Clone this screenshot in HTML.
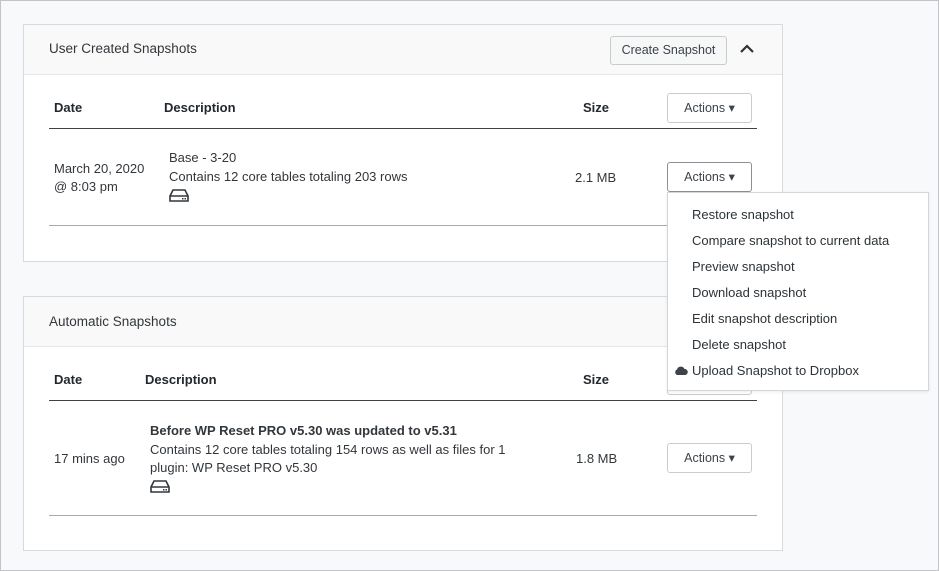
<!DOCTYPE html>
<html><head><style>
*{margin:0;padding:0;box-sizing:border-box}
body{width:939px;height:571px;background:#f8f9fa;font-family:"Liberation Sans",sans-serif;font-size:13px;color:#32373c;position:relative;overflow:hidden}
.frame{position:absolute;left:0;top:0;width:939px;height:571px;border:1px solid #c3c4c7}
.a{position:absolute;white-space:nowrap}
.panel{position:absolute;background:#fff;border:1px solid #d7dade}
.ph{position:absolute;left:0;right:0;top:0;background:#f9f9f9;border-bottom:1px solid #e2e4e7}
.b{font-weight:bold;color:#23282d}
.btn{position:absolute;border:1px solid #c8ccd0;border-radius:3px;background:#fff;color:#3c434a;font-size:12.5px;text-align:center}
.line{position:absolute;left:49px;width:708px}
.menu{position:absolute;left:667px;top:192px;width:262px;height:199px;background:#fff;border:1px solid #d4d6d9;box-shadow:0 1px 3px rgba(0,0,0,.08)}
.menu div{position:absolute;left:24px;font-size:13px;color:#2c3338}
</style></head><body>
<div class="frame"></div>
<div class="panel" style="left:23px;top:24px;width:760px;height:238px">
 <div class="ph" style="height:50px"></div>
</div>
<div class="a" style="left:49px;top:41px;font-size:13.5px">User Created Snapshots</div>
<div class="btn" style="left:610px;top:36px;width:117px;height:29px;line-height:27px;background:#f6f7f7">Create Snapshot</div>
<svg class="a" style="left:739px;top:43px" width="16" height="12" viewBox="0 0 16 12"><path d="M2 9 L8 3 L14 9" fill="none" stroke="#333" stroke-width="2.2"/></svg>
<div class="a b" style="left:54px;top:100px">Date</div>
<div class="a b" style="left:164px;top:100px">Description</div>
<div class="a b" style="left:583px;top:100px">Size</div>
<div class="btn" style="left:667px;top:93px;width:85px;height:30px;line-height:28px">Actions &#9662;</div>
<div class="line" style="top:128px;border-top:1px solid #3c434a"></div>
<div class="a" style="left:54px;top:160px;line-height:18px">March 20, 2020<br>@ 8:03 pm</div>
<div class="a" style="left:169px;top:150px;color:#32373c">Base - 3-20</div>
<div class="a" style="left:169px;top:169px">Contains 12 core tables totaling 203 rows</div>
<svg class="a" style="left:169px;top:188px" width="20" height="15" viewBox="0 0 20 15"><path d="M1 8 L4 2 H16 L19 8 V13 H1 Z M1 8 H19" fill="none" stroke="#32373c" stroke-width="1.6"/><rect x="13" y="10" width="1.5" height="1.5" fill="#32373c"/><rect x="15.5" y="10" width="1.5" height="1.5" fill="#32373c"/></svg>
<div class="a" style="left:575px;top:170px">2.1 MB</div>
<div class="btn" style="left:667px;top:162px;width:85px;height:30px;line-height:28px;border-color:#8c8f94">Actions &#9662;</div>
<div class="line" style="top:225px;border-top:1px solid #a7aaad"></div>

<div class="panel" style="left:23px;top:296px;width:760px;height:255px">
 <div class="ph" style="height:50px"></div>
</div>
<div class="a" style="left:49px;top:314px;font-size:13.5px">Automatic Snapshots</div>
<div class="a b" style="left:54px;top:372px">Date</div>
<div class="a b" style="left:145px;top:372px">Description</div>
<div class="a b" style="left:583px;top:372px">Size</div>
<div class="btn" style="left:667px;top:365px;width:85px;height:30px"></div>
<div class="line" style="top:400px;border-top:1px solid #3c434a"></div>
<div class="a" style="left:54px;top:451px">17 mins ago</div>
<div class="a b" style="left:150px;top:423px;color:#32373c">Before WP Reset PRO v5.30 was updated to v5.31</div>
<div class="a" style="left:150px;top:441px;line-height:18px">Contains 12 core tables totaling 154 rows as well as files for 1<br>plugin: WP Reset PRO v5.30</div>
<svg class="a" style="left:150px;top:479px" width="20" height="15" viewBox="0 0 20 15"><path d="M1 8 L4 2 H16 L19 8 V13 H1 Z M1 8 H19" fill="none" stroke="#32373c" stroke-width="1.6"/><rect x="13" y="10" width="1.5" height="1.5" fill="#32373c"/><rect x="15.5" y="10" width="1.5" height="1.5" fill="#32373c"/></svg>
<div class="a" style="left:576px;top:451px">1.8 MB</div>
<div class="btn" style="left:667px;top:443px;width:85px;height:30px;line-height:28px">Actions &#9662;</div>
<div class="line" style="top:515px;border-top:1px solid #a7aaad"></div>

<div class="menu">
 <div style="top:14px">Restore snapshot</div>
 <div style="top:40px">Compare snapshot to current data</div>
 <div style="top:66px">Preview snapshot</div>
 <div style="top:92px">Download snapshot</div>
 <div style="top:118px">Edit snapshot description</div>
 <div style="top:144px">Delete snapshot</div>
 <div style="top:170px">Upload Snapshot to Dropbox</div>
 <svg style="position:absolute;left:6px;top:172px" width="14" height="11" viewBox="0 0 14 11"><path d="M3 10 A3 3 0 0 1 3 4.5 A4 4 0 0 1 10.5 4 A3 3 0 0 1 11 10 Z" fill="#3c434a"/></svg>
</div>
</body></html>
